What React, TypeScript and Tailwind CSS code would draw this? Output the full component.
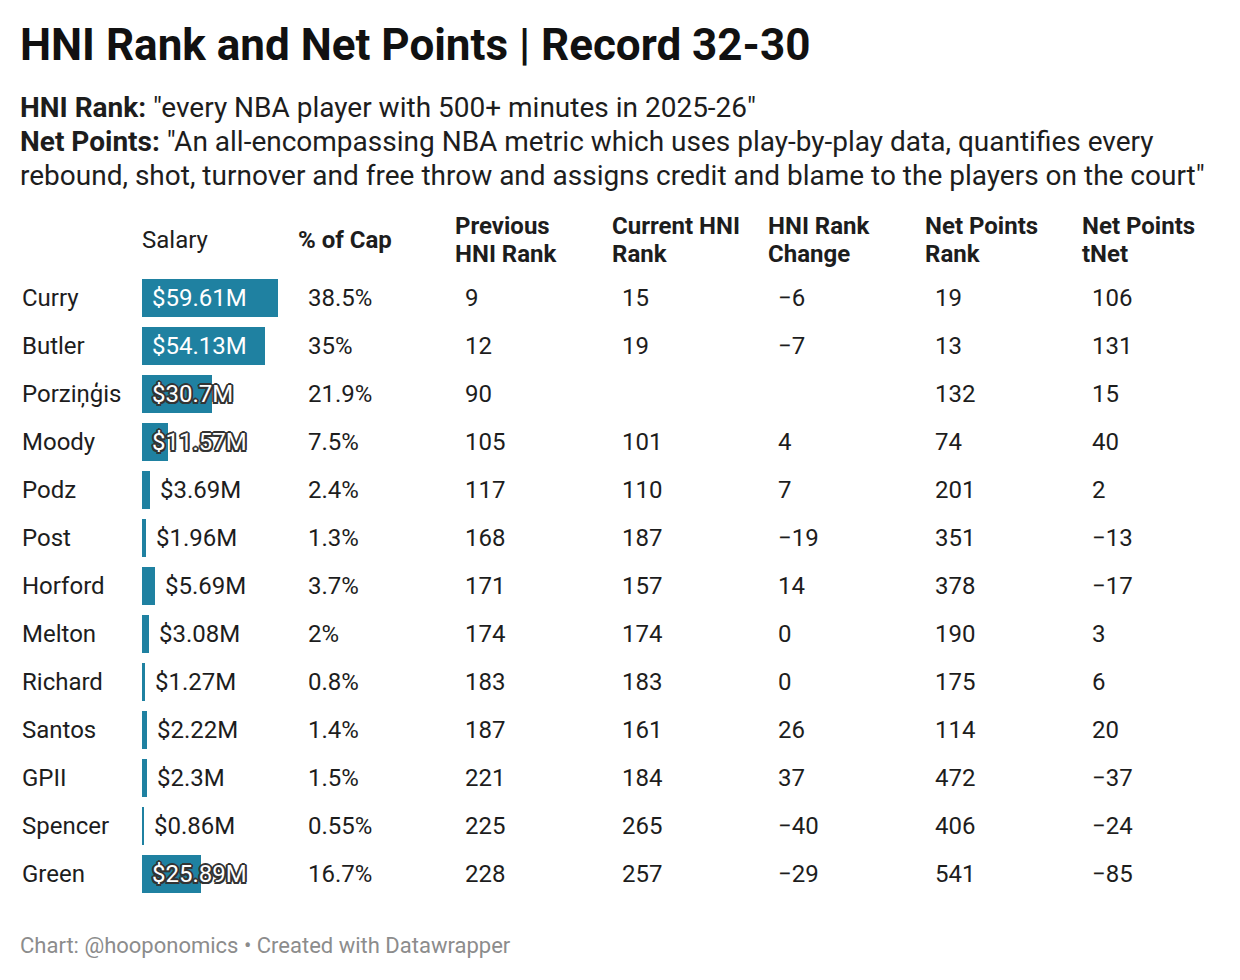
import React from 'react';

type Row = {
  name: string;
  salary: number;
  label: string;
  mode: 'inside' | 'overlap' | 'outside';
  cap: string;
  prev: string;
  curr: string;
  change: string;
  netRank: string;
  tNet: string;
};

const rows: Row[] = [
  { name: 'Curry', salary: 59.61, label: '$59.61M', mode: 'inside', cap: '38.5%', prev: '9', curr: '15', change: '\u22126', netRank: '19', tNet: '106' },
  { name: 'Butler', salary: 54.13, label: '$54.13M', mode: 'inside', cap: '35%', prev: '12', curr: '19', change: '\u22127', netRank: '13', tNet: '131' },
  { name: 'Porziņģis', salary: 30.7, label: '$30.7M', mode: 'overlap', cap: '21.9%', prev: '90', curr: '', change: '', netRank: '132', tNet: '15' },
  { name: 'Moody', salary: 11.57, label: '$11.57M', mode: 'overlap', cap: '7.5%', prev: '105', curr: '101', change: '4', netRank: '74', tNet: '40' },
  { name: 'Podz', salary: 3.69, label: '$3.69M', mode: 'outside', cap: '2.4%', prev: '117', curr: '110', change: '7', netRank: '201', tNet: '2' },
  { name: 'Post', salary: 1.96, label: '$1.96M', mode: 'outside', cap: '1.3%', prev: '168', curr: '187', change: '\u221219', netRank: '351', tNet: '\u221213' },
  { name: 'Horford', salary: 5.69, label: '$5.69M', mode: 'outside', cap: '3.7%', prev: '171', curr: '157', change: '14', netRank: '378', tNet: '\u221217' },
  { name: 'Melton', salary: 3.08, label: '$3.08M', mode: 'outside', cap: '2%', prev: '174', curr: '174', change: '0', netRank: '190', tNet: '3' },
  { name: 'Richard', salary: 1.27, label: '$1.27M', mode: 'outside', cap: '0.8%', prev: '183', curr: '183', change: '0', netRank: '175', tNet: '6' },
  { name: 'Santos', salary: 2.22, label: '$2.22M', mode: 'outside', cap: '1.4%', prev: '187', curr: '161', change: '26', netRank: '114', tNet: '20' },
  { name: 'GPII', salary: 2.3, label: '$2.3M', mode: 'outside', cap: '1.5%', prev: '221', curr: '184', change: '37', netRank: '472', tNet: '\u221237' },
  { name: 'Spencer', salary: 0.86, label: '$0.86M', mode: 'outside', cap: '0.55%', prev: '225', curr: '265', change: '\u221240', netRank: '406', tNet: '\u221224' },
  { name: 'Green', salary: 25.89, label: '$25.89M', mode: 'overlap', cap: '16.7%', prev: '228', curr: '257', change: '\u221229', netRank: '541', tNet: '\u221285' },
];

const MAX_BAR = 136;
const MAX_SALARY = 59.61;

const SalaryCell: React.FC<{ row: Row }> = ({ row }) => {
  const width = Math.max(2, Math.round((row.salary / MAX_SALARY) * MAX_BAR));
  const pad = row.mode === 'outside' ? width + 10 : 10;
  return (
    <div className="grid items-center h-12">
      <div className="[grid-area:1/1] h-[38px] bg-[#1f81a1]" style={{ width }} />
      <div
        className={
          '[grid-area:1/1] whitespace-nowrap ' +
          (row.mode === 'inside'
            ? 'text-white'
            : row.mode === 'overlap'
            ? 'text-white [text-shadow:-2px_0_#333,2px_0_#333,0_-2px_#333,0_2px_#333,-1.5px_-1.5px_#333,1.5px_1.5px_#333,-1.5px_1.5px_#333,1.5px_-1.5px_#333]'
            : 'text-[#1d1d1d]')
        }
        style={{ paddingLeft: pad }}
      >
        {row.label}
      </div>
    </div>
  );
};

export default function App() {
  const cols = 'grid grid-cols-[122px_156px_157px_157px_156px_157px_157px_138px]';
  return (
    <div className="w-[1240px] h-[980px] bg-white px-5 pt-[19px] font-['Roboto',sans-serif] text-[#1d1d1d]">
      <h1 className="text-[44px] leading-[52px] font-bold text-[#111]">
        HNI Rank and Net Points | Record 32-30
      </h1>

      <div className="mt-[20px] text-[28px] leading-[34px]">
        <p>
          <span className="font-bold">HNI Rank:</span> "every NBA player with 500+ minutes in 2025-26"
        </p>
        <p>
          <span className="font-bold">Net Points:</span> "An all-encompassing NBA metric which uses play-by-play data, quantifies every
          <br />
          rebound, shot, turnover and free throw and assigns credit and blame to the players on the court"
        </p>
      </div>

      <div className="mt-[19px] text-[24px]">
        <div className={cols + ' leading-[28px] items-center'}>
          <div />
          <div className="font-normal">Salary</div>
          <div className="font-bold">% of Cap</div>
          <div className="font-bold">Previous<br />HNI Rank</div>
          <div className="font-bold">Current HNI<br />Rank</div>
          <div className="font-bold">HNI Rank<br />Change</div>
          <div className="font-bold">Net Points<br />Rank</div>
          <div className="font-bold whitespace-nowrap">Net Points<br />tNet</div>
        </div>

        <div className="mt-[6px]">
          {rows.map((r) => (
            <div key={r.name} className={cols + ' h-12 items-center'}>
              <div className="pl-[2px]">{r.name}</div>
              <SalaryCell row={r} />
              <div className="pl-[10px]">{r.cap}</div>
              <div className="pl-[10px]">{r.prev}</div>
              <div className="pl-[10px]">{r.curr}</div>
              <div className="pl-[10px]">{r.change}</div>
              <div className="pl-[10px]">{r.netRank}</div>
              <div className="pl-[10px]">{r.tNet}</div>
            </div>
          ))}
        </div>
      </div>

      <div className="mt-[34px] text-[22px] leading-[28px] text-[#8c8c8c]">
        Chart: @hooponomics • Created with Datawrapper
      </div>
    </div>
  );
}
